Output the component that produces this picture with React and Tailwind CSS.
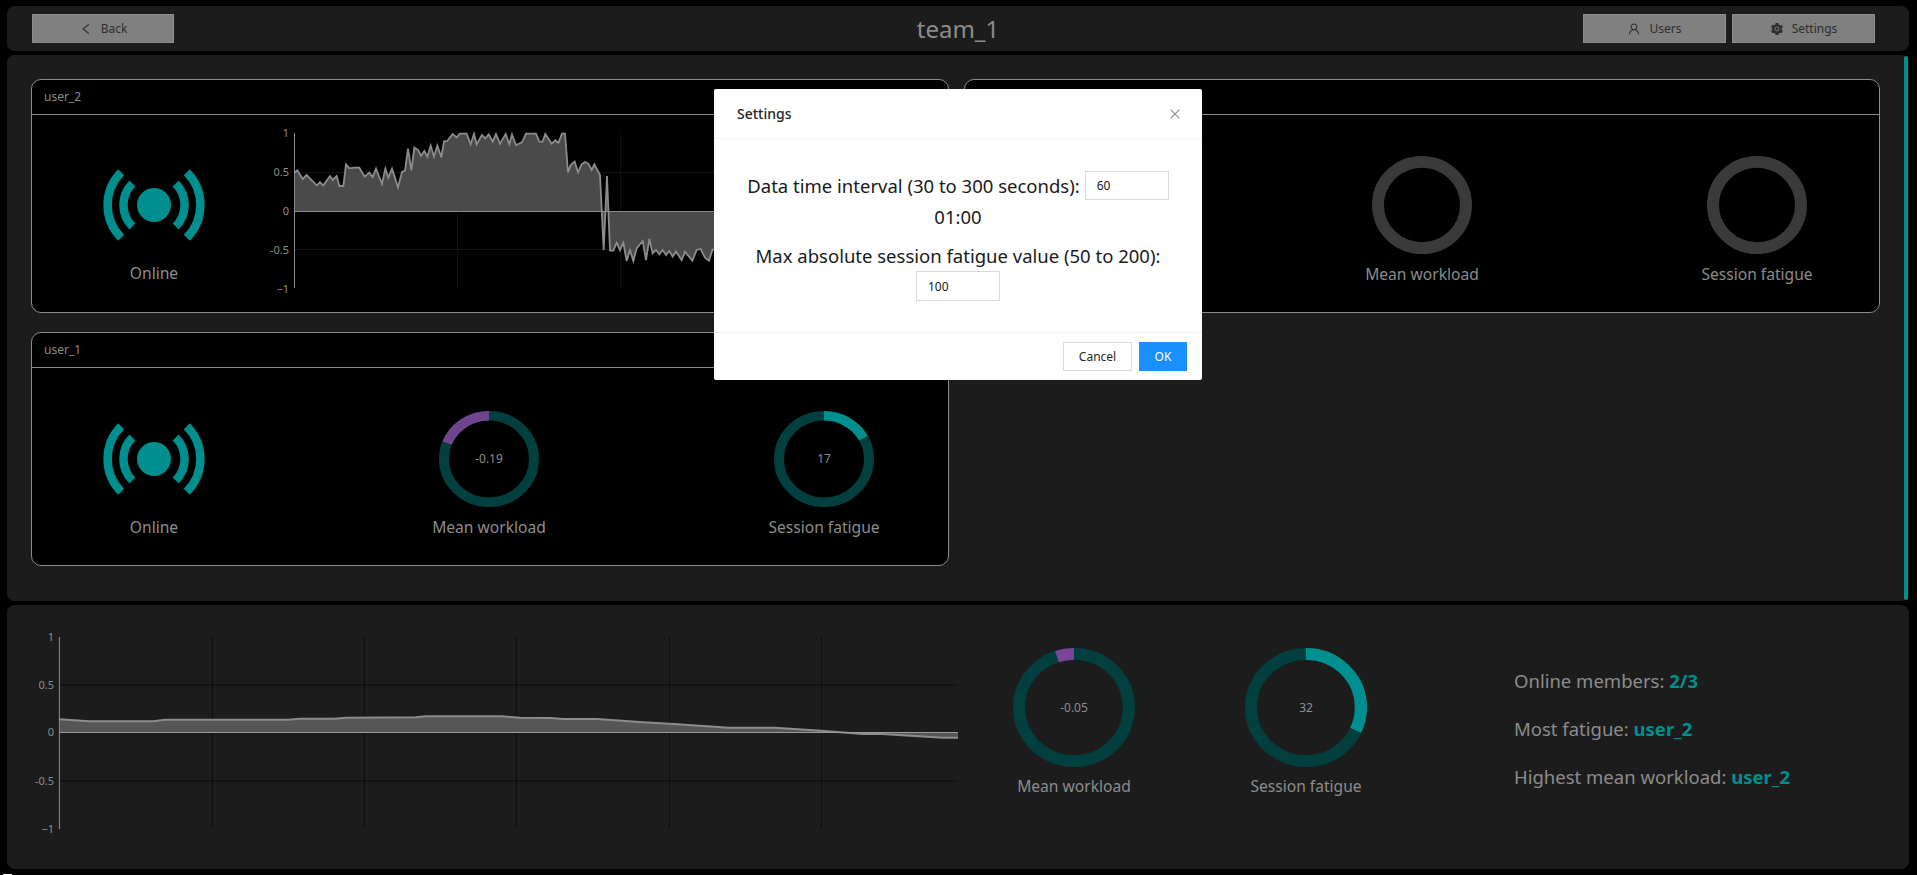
import React from 'react';
import { AiOutlineLeft, AiOutlineUser, AiFillSetting, AiOutlineClose } from 'react-icons/ai';

const FONT = '"Noto Sans", "Open Sans", sans-serif';

// traced from the reference, 3x crop coordinates
const USER_2_LINE = [
  [44, 172], [52, 166], [68, 192], [80, 180], [110, 211], [120, 202], [130, 211], [150, 183], [158, 195], [170, 183],
  [178, 213], [190, 213], [198, 148], [208, 160], [222, 158], [238, 158], [254, 185], [268, 173], [278, 186], [288, 161],
  [306, 207], [316, 161], [325, 188], [336, 161], [354, 217], [366, 171], [375, 167], [384, 101], [394, 166], [403, 98],
  [415, 106], [423, 122], [433, 108], [442, 125], [452, 92], [462, 125], [472, 92], [484, 127], [492, 79], [502, 78],
  [518, 57], [530, 67], [540, 56], [560, 56], [572, 88], [582, 57], [590, 88], [606, 60], [616, 70], [626, 58],
  [638, 80], [648, 57], [660, 86], [677, 57], [688, 88], [696, 58], [708, 90], [726, 82], [738, 56], [768, 56],
  [778, 80], [788, 80], [796, 57], [815, 86], [826, 76], [835, 84], [846, 56], [855, 56], [864, 172], [872, 150],
  [884, 140], [894, 172], [905, 148], [915, 141], [925, 146], [935, 165], [943, 148], [960, 180], [971, 405], [981, 183],
  [990, 407], [1000, 407], [1010, 383], [1020, 405], [1030, 383], [1040, 438], [1050, 405], [1060, 438], [1070, 400], [1088, 378],
  [1098, 435], [1108, 372], [1118, 415], [1128, 405], [1138, 418], [1148, 405], [1158, 420], [1168, 408], [1178, 425], [1188, 410],
  [1205, 435], [1215, 410], [1237, 437], [1250, 405], [1262, 402], [1275, 428], [1287, 437], [1297, 405], [1310, 400],
];

const TEAM_LINE = [
  [59.4, 719.3], [88.8, 721.3], [153, 721.3], [165, 719.7], [288, 719.7], [300, 718.7], [334, 718.7], [346, 717.7],
  [416, 717.3], [426, 716.3], [502, 716.3], [520, 717.7], [551, 718], [563, 719], [597, 719], [643, 722.3],
  [674, 724], [729, 727.7], [775, 727.7], [821, 730.7], [863, 734], [882, 734], [943, 737.7], [958, 737.7],
];

const toPath = (pts) => pts.map(([x, y], i) => `${i ? 'L' : 'M'}${x} ${y}`).join(' ');

const User2Chart = () => {
  // svg sits at x=266, y=120 on the page
  const pts = USER_2_LINE.map(([x, y]) => [14 + x / 3, y / 3 - 5]);
  const ticks = [['1', 13], ['0.5', 52], ['0', 91], ['-0.5', 130], ['−1', 169]];
  const x0 = pts[0][0];
  const xEnd = pts[pts.length - 1][0];
  return (
    <svg width="670" height="175" className="shrink-0">
      <line x1={x0} x2="660" y1="52.5" y2="52.5" stroke="#141414" />
      <line x1={x0} x2="660" y1="129.5" y2="129.5" stroke="#141414" />
      <line x1="191.5" x2="191.5" y1="13" y2="168" stroke="#111111" />
      <line x1="354.5" x2="354.5" y1="13" y2="168" stroke="#111111" />
      <path d={`M${x0} 91 ${toPath(pts).replace('M', 'L')} L${xEnd} 91 Z`} fill="#4a4a4a" />
      <path d={toPath(pts)} fill="none" stroke="#8c8c8c" strokeWidth="1.8" />
      <line x1={x0} x2="660" y1="91.5" y2="91.5" stroke="#8c8c8c" />
      <line x1="28.5" x2="28.5" y1="13" y2="168" stroke="#8c8c8c" />
      {ticks.map(([label, y]) => (
        <text key={label} x="23" y={y + 4} textAnchor="end" fontSize="11" fill="#8c8c8c">{label}</text>
      ))}
    </svg>
  );
};

const TeamChart = () => {
  // svg sits at x=20, y=630 on the page
  const pts = TEAM_LINE.map(([x, y]) => [x - 20, y - 630]);
  const ticks = [['1', 7], ['0.5', 55], ['0', 102], ['-0.5', 151], ['−1', 199]];
  const x0 = pts[0][0];
  const xEnd = pts[pts.length - 1][0];
  return (
    <svg width="945" height="205" className="shrink-0">
      {[192, 344, 496, 649, 801].map((x) => (
        <line key={x} x1={x + 0.5} x2={x + 0.5} y1="7" y2="199" stroke="#0e0e0e" />
      ))}
      <line x1={x0} x2={xEnd} y1="55" y2="55" stroke="#0a0a0a" />
      <line x1={x0} x2={xEnd} y1="151" y2="151" stroke="#0a0a0a" />
      <path d={`M${x0} 102 ${toPath(pts).replace('M', 'L')} L${xEnd} 102 Z`} fill="#565656" />
      <path d={toPath(pts)} fill="none" stroke="#8c8c8c" strokeWidth="2" />
      <line x1={x0} x2={xEnd} y1="102.5" y2="102.5" stroke="#9a9a9a" />
      <line x1={x0} x2={x0} y1="7" y2="199" stroke="#8c8c8c" />
      {ticks.map(([label, y]) => (
        <text key={label} x="34" y={y + 4} textAnchor="end" fontSize="11" fill="#8c8c8c">{label}</text>
      ))}
    </svg>
  );
};

const Ring = ({ value, percent = 0, color = '#008f8f', track = '#024040', width = 100, height = 96, stroke = 10 }) => {
  const start = percent < 0 ? -90 + percent * 3.6 : -90;
  const r = 50 - stroke / 2;
  return (
    <div className="relative" style={{ width, height }}>
      <svg width={width} height={height} viewBox="0 0 100 100" preserveAspectRatio="none">
        <circle cx="50" cy="50" r={r} fill="none" stroke={track} strokeWidth={stroke} />
        {percent !== 0 && (
          <circle
            cx="50"
            cy="50"
            r={r}
            fill="none"
            stroke={color}
            strokeWidth={stroke}
            pathLength="100"
            strokeDasharray={`${Math.abs(percent)} 100`}
            transform={`rotate(${start} 50 50)`}
          />
        )}
      </svg>
      {value !== undefined && (
        <div className="absolute inset-0 flex items-center justify-center text-[12px] text-[#8c8c8c]">{value}</div>
      )}
    </div>
  );
};

const OnlineIcon = () => (
  <svg width="104" height="72" viewBox="-52 -36 104 72" fill="none" stroke="#008f8f" strokeWidth="8.5">
    <circle cx="0" cy="0" r="17" fill="#008f8f" stroke="none" />
    <path d="M-32.8 -32.8 A46.4 46.4 0 0 0 -32.8 32.8" />
    <path d="M-21.6 -21.6 A30.5 30.5 0 0 0 -21.6 21.6" />
    <path d="M32.8 -32.8 A46.4 46.4 0 0 1 32.8 32.8" />
    <path d="M21.6 -21.6 A30.5 30.5 0 0 1 21.6 21.6" />
  </svg>
);

const Metric = ({ label, children }) => (
  <div className="flex w-[124px] shrink-0 flex-col items-center">
    <div className="flex items-center justify-center">{children}</div>
    <div className="mt-[9px] whitespace-nowrap text-[15.6px] leading-[22px] text-[#8c8c8c]">{label}</div>
  </div>
);

const Card = ({ title, children }) => (
  <div className="h-[234px] overflow-hidden rounded-[10px] border border-[#8c8c8c] bg-black">
    <div className="flex h-[35px] items-center border-b border-[#8c8c8c] px-[12px] text-[12px] text-[#8c8c8c]">{title}</div>
    {children}
  </div>
);

const HeaderButton = ({ icon, children, className = '' }) => (
  <button className={`flex h-[29px] items-center justify-center gap-2 border border-[#8c8c8c] bg-[#808080] text-[12px] text-[#2e2e2e] ${className}`}>
    {icon}
    {children}
  </button>
);

const SettingsModal = () => (
  <div className="absolute left-[714px] top-[89px] flex h-[291px] w-[488px] flex-col rounded-[2px] bg-white">
    <div className="flex h-[50px] items-center justify-between border-b border-[#f0f0f0] pl-[23px] pr-[20px] text-[14px] font-medium text-[#262626]">
      Settings
      <AiOutlineClose size={14} className="text-[#8c8c8c]" />
    </div>
    <div className="flex flex-1 flex-col items-center pt-[31px] text-[18.5px] text-[#1a1a1a]">
      <div className="flex h-[31px] items-center whitespace-nowrap">
        <span>Data time interval (30 to 300 seconds):</span>
        <input readOnly value="60" className="ml-[5px] h-[29px] w-[84px] border border-[#d9d9d9] px-[11px] text-[12px]" />
      </div>
      <div className="flex h-[31px] items-center">01:00</div>
      <div className="mt-2 flex h-[31px] items-center whitespace-nowrap">Max absolute session fatigue value (50 to 200):</div>
      <input readOnly value="100" className="h-[30px] w-[84px] border border-[#d9d9d9] px-[11px] text-[12px]" />
    </div>
    <div className="flex h-[48px] items-start justify-end gap-[7px] border-t border-[#f0f0f0] pr-[15px] pt-[9px] text-[12px]">
      <button className="h-[29px] w-[69px] border border-[#d9d9d9] text-[#262626]">Cancel</button>
      <button className="h-[29px] w-[48px] bg-[#1890ff] text-white">OK</button>
    </div>
  </div>
);

const App = () => (
  <div className="relative flex h-[875px] w-[1917px] flex-col gap-1 overflow-hidden bg-black pl-[7px] pr-2 pt-[6px]" style={{ fontFamily: FONT }}>
    <header className="grid h-[45px] shrink-0 grid-cols-3 items-center rounded-[8px] bg-[#1c1c1c] px-[25px]">
      <HeaderButton icon={<AiOutlineLeft size={14} />} className="w-[142px]">Back</HeaderButton>
      <div className="text-center text-[24px] leading-none text-[#8c8c8c]">team_1</div>
      <div className="flex justify-end gap-[6px] pr-[9px]">
        <HeaderButton icon={<AiOutlineUser size={14} />} className="w-[143px]">Users</HeaderButton>
        <HeaderButton icon={<AiFillSetting size={14} />} className="w-[143px]">Settings</HeaderButton>
      </div>
    </header>

    <main className="flex h-[546px] shrink-0 rounded-[8px] bg-[#1c1c1c]">
      <div className="grid flex-1 grid-cols-[918px_916px] content-start gap-x-[15px] gap-y-[19px] pl-6 pr-6 pt-6">
        <Card title="user_2">
          <div className="flex pl-[60px]">
            <div className="pt-[41px]">
              <Metric label="Online">
                <div className="flex h-[97px] items-center"><OnlineIcon /></div>
              </Metric>
            </div>
            <div className="ml-[50px] mt-[5px]"><User2Chart /></div>
          </div>
        </Card>
        <Card title="">
          <div className="flex justify-between px-[60px] pt-[41px]">
            <div className="w-[124px]" />
            <Metric label="Mean workload"><Ring track="#3a3a3a" height={98} stroke={12} /></Metric>
            <Metric label="Session fatigue"><Ring track="#3a3a3a" height={98} stroke={12} /></Metric>
          </div>
        </Card>
        <Card title="user_1">
          <div className="flex justify-between pl-[60px] pr-[62px] pt-[43px]">
            <Metric label="Online">
              <div className="flex h-[96px] items-center"><OnlineIcon /></div>
            </Metric>
            <Metric label="Mean workload"><Ring value="-0.19" percent={-19} color="#6f4590" /></Metric>
            <Metric label="Session fatigue"><Ring value="17" percent={17} /></Metric>
          </div>
        </Card>
      </div>
      <div className="my-px mr-px w-1 shrink-0 rounded-full bg-[#008f8f]" />
    </main>

    <section className="flex h-[264px] shrink-0 rounded-[8px] bg-[#1c1c1c] pl-[13px]">
      <div className="mt-[25px]"><TeamChart /></div>
      <div className="ml-[47px] mt-[43px] flex gap-[108px]">
        <div className="flex w-[124px] flex-col items-center">
          <Ring value="-0.05" percent={-5} color="#7a4596" width={122} height={119} />
          <div className="mt-2 whitespace-nowrap text-[15.6px] leading-[22px] text-[#8c8c8c]">Mean workload</div>
        </div>
        <div className="flex w-[124px] flex-col items-center">
          <Ring value="32" percent={32} width={122} height={119} />
          <div className="mt-2 whitespace-nowrap text-[15.6px] leading-[22px] text-[#8c8c8c]">Session fatigue</div>
        </div>
      </div>
      <div className="ml-[146px] mt-[63px] flex flex-col gap-[22px] text-[18.5px] leading-[26px] text-[#8c8c8c]">
        <div>Online members: <b className="font-bold text-[#008f8f]">2/3</b></div>
        <div>Most fatigue: <b className="font-bold text-[#008f8f]">user_2</b></div>
        <div>Highest mean workload: <b className="font-bold text-[#008f8f]">user_2</b></div>
      </div>
    </section>

    <SettingsModal />
    <div className="absolute bottom-0 left-[3px] h-px w-[9px] bg-white" />
  </div>
);

export default App;
